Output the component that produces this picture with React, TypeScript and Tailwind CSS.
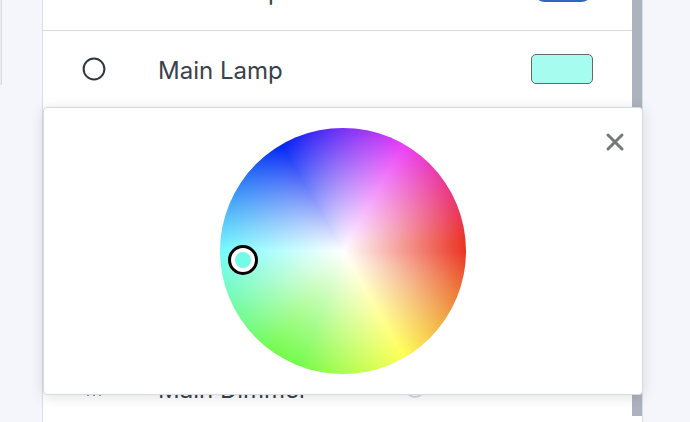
import { useState } from 'react'
import type { ReactNode } from 'react'
import { clsx } from 'clsx'

interface HueSat {
  hue: number
  sat: number
}

function CircleIcon() {
  return (
    <svg viewBox="0 0 24 24" className="size-6 shrink-0" fill="none" stroke="#2b3641" strokeWidth="2" aria-hidden="true">
      <circle cx="12" cy="12" r="10.4" />
    </svg>
  )
}

function DotsIcon() {
  return (
    <svg viewBox="0 0 24 24" className="size-6 shrink-0" fill="#6b7280" aria-hidden="true">
      <circle cx="6" cy="19" r="1" />
      <circle cx="12" cy="19" r="1" />
      <circle cx="18" cy="19" r="1" />
    </svg>
  )
}

function Row({ icon, label, htmlFor, className, children }: {
  icon?: ReactNode
  label: string
  htmlFor: string
  className?: string
  children: ReactNode
}) {
  return (
    <li className={clsx('flex items-center border-b border-[#d5dae2] px-[39px]', className)}>
      <span className="w-[76px] shrink-0">{icon}</span>
      <label htmlFor={htmlFor} className="flex-1 pt-1 text-2xl text-[#39424c]">
        {label}
      </label>
      {children}
    </li>
  )
}

function ColorWheel({ hue, sat }: HueSat) {
  // hue runs clockwise from the right, saturation grows outwards
  const angle = (hue * Math.PI) / 180
  const left = 50 + Math.cos(angle) * sat * 50
  const top = 50 + Math.sin(angle) * sat * 50

  return (
    <div className="relative size-[246px] rounded-full bg-[radial-gradient(closest-side,#ffffff,rgba(255,255,255,0)),conic-gradient(from_90deg,#ea3323,#f09a43_30deg,#ffff54_60deg,#75fb4c_110deg,#75fb4c_125deg,#75fbfd_180deg,#0023f5_240deg,#ea3ff7_300deg,#ea3323_355deg)]">
      <span
        className="absolute size-[30px] -translate-x-1/2 -translate-y-1/2 rounded-full border-3 border-black bg-white p-1"
        style={{ left: `${left}%`, top: `${top}%` }}
      >
        <span className="block size-4 rounded-full bg-[#75fbe5]" />
      </span>
    </div>
  )
}

export default function App() {
  const [open, setOpen] = useState(true)
  const [on, setOn] = useState(true)
  const [level, setLevel] = useState(0)

  return (
    <div className="flex h-screen items-start overflow-hidden bg-[#f5f6fb] font-[Inter,sans-serif]">
      {/* Edge of the neighbouring card */}
      <div className="h-[85px] w-0.5 border-r border-[#d9dde8] bg-[#e9ebf3]" />

      <main className="mr-[47px] ml-10 flex min-h-screen flex-1 items-start border-x border-[#d9dde6] bg-white">
        <ul className="-mt-[51px] min-w-0 flex-1">
          <Row label="Main Lamp" htmlFor="lamp-switch" className="h-[82px]">
            <input
              id="lamp-switch"
              type="checkbox"
              role="switch"
              checked={on}
              onChange={() => setOn(!on)}
              className="h-6 w-[60px] appearance-none rounded-full bg-gray-300 checked:bg-[#2f66c4]"
            />
          </Row>

          <Row icon={<CircleIcon />} label="Main Lamp" htmlFor="lamp-color" className="h-[76px] border-b-0">
            <button
              id="lamp-color"
              type="button"
              aria-expanded={open}
              onClick={() => setOpen(!open)}
              className="h-[30px] w-[62px] rounded-[5px] border border-[#62686e] bg-[#a5fcef]"
            />
          </Row>

          {open && (
            <li className="relative z-10 -mr-[11px] grid grid-cols-[1fr_auto_1fr] items-start rounded border border-[#d5dae4] bg-white py-5 pr-[13px] pl-3 shadow-[0_2px_14px_rgba(0,0,0,0.12)]">
              <span />
              <ColorWheel hue={175} sat={0.81} />
              <button type="button" aria-label="Close" onClick={() => setOpen(false)} className="justify-self-end">
                <svg viewBox="0 0 28 28" className="size-7" fill="none" stroke="#75787b" strokeWidth="3" strokeLinecap="round">
                  <path d="M7 7 21 21M21 7 7 21" />
                </svg>
              </button>
            </li>
          )}

          <Row icon={<DotsIcon />} label="Main Dimmer" htmlFor="dimmer" className="-mt-[46px] h-[77px] border-b-0">
            <input
              id="dimmer"
              type="range"
              value={level}
              onChange={(e) => setLevel(Number(e.target.value))}
              className="h-5 w-[188px] appearance-none bg-transparent [&::-webkit-slider-thumb]:size-5 [&::-webkit-slider-thumb]:appearance-none [&::-webkit-slider-thumb]:rounded-full [&::-webkit-slider-thumb]:border-2 [&::-webkit-slider-thumb]:border-[#d4d7de] [&::-webkit-slider-thumb]:bg-white"
            />
          </Row>
        </ul>

        {/* Scrollbar */}
        <div className="h-[416px] w-[10px] bg-[#adb3bc]" />
      </main>
    </div>
  )
}
